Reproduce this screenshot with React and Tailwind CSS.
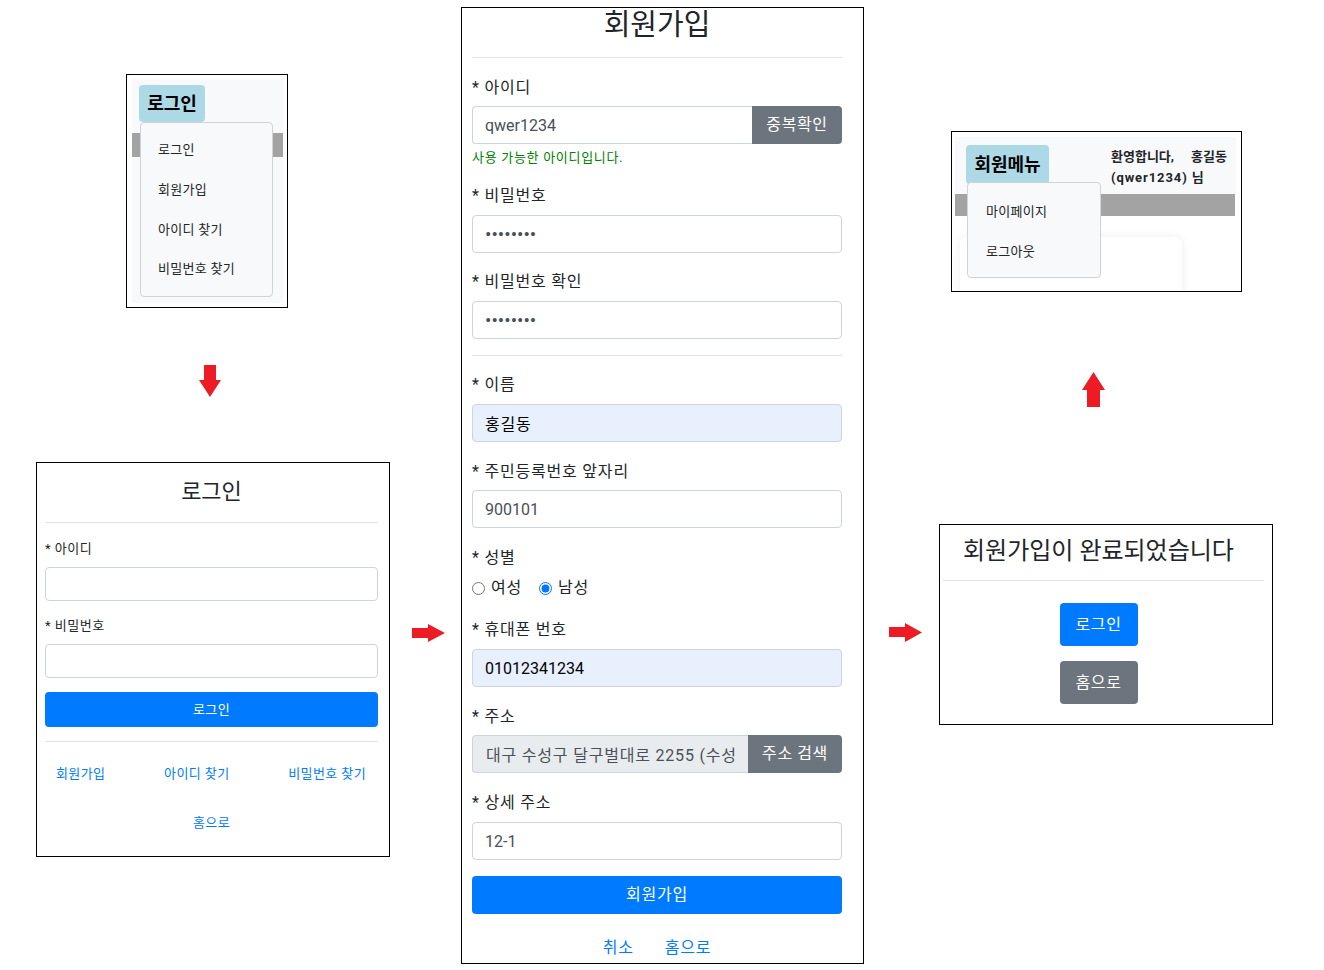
import React from "react";

function Label({ children, className = "" }) {
  return (
    <div
      className={
        "h-[22px] pt-[4px] text-[16px] leading-[18px] tracking-[0.8px] text-[#212529] " +
        className
      }
    >
      {children}
    </div>
  );
}

function Field({ value, type = "text", className = "" }) {
  return (
    <input
      type={type}
      defaultValue={value}
      readOnly
      className={
        "block h-[38px] w-full rounded-[4px] border border-[#ced4da] px-[12px] outline-none " +
        className
      }
    />
  );
}

function Arrows() {
  return (
    <svg
      className="pointer-events-none absolute left-0 top-0"
      width="1324"
      height="970"
      viewBox="0 0 1324 970"
    >
      <polygon
        fill="#ed1c24"
        points="204,365 216,365 216,380 221,380 210,397 199,380 204,380"
      />
      <polygon
        fill="#ed1c24"
        points="412,628 428,628 428,624 445,633 428,642 428,638 412,638"
      />
      <polygon
        fill="#ed1c24"
        points="889,627 905,627 905,623 922,632.5 905,642 905,637 889,637"
      />
      <polygon
        fill="#ed1c24"
        points="1093.5,372 1105,390 1100,390 1100,407 1087,407 1087,390 1082,390"
      />
    </svg>
  );
}

function LoginMenuPanel() {
  return (
    <div className="absolute left-[126px] top-[74px] h-[234px] w-[162px] border border-black bg-white pb-[4px] pl-[5px] pr-[4px] pt-[4px]">
      <div className="flex h-full flex-col bg-[#f8f9fa]">
        <div className="h-[54px] pl-[7px] pt-[6px]">
          <div className="flex h-[37px] w-[66px] items-center justify-center rounded-[4px] bg-[#add8e6] text-[18px] font-bold text-black">
            로그인
          </div>
        </div>
        <div className="h-[24px] bg-[#a3a3a3]" />
        <div className="flex-1" />
      </div>
      <div className="absolute left-[13px] top-[47px] flex h-[175px] w-[133px] flex-col rounded-[4px] border border-[#d3d3d3] bg-[#f8f9fa] pt-[7px] text-[13px] tracking-[0.3px] text-[#212529]">
        <div className="flex h-[40px] items-center pl-[17px]">로그인</div>
        <div className="flex h-[40px] items-center pl-[17px]">회원가입</div>
        <div className="flex h-[39px] items-center pl-[17px]">아이디 찾기</div>
        <div className="flex h-[40px] items-center pl-[17px]">비밀번호 찾기</div>
      </div>
    </div>
  );
}

function LoginFormPanel() {
  return (
    <div className="absolute left-[36px] top-[462px] flex h-[395px] w-[354px] flex-col border border-black bg-white pl-[8px] pr-[11px]">
      <div className="mt-[14px] text-center text-[22px] leading-[30px] text-[#212529]">
        로그인
      </div>
      <div className="mt-[15px] border-t border-[#e2e2e2]" />
      <div className="mt-[17px] text-[13px] leading-[18px] tracking-[0.5px] text-[#212529]">
        * 아이디
      </div>
      <div className="mt-[9px] h-[34px] rounded-[4px] border border-[#ced4da] bg-white" />
      <div className="mt-[16px] text-[13px] leading-[18px] tracking-[0.5px] text-[#212529]">
        * 비밀번호
      </div>
      <div className="mt-[9px] h-[34px] rounded-[4px] border border-[#ced4da] bg-white" />
      <div className="mt-[14px] flex h-[35px] items-center justify-center rounded-[4px] bg-[#007bff] text-[13px] tracking-[0.3px] text-white">
        로그인
      </div>
      <div className="mt-[14px] border-t border-[#e2e2e2]" />
      <div className="mt-[23px] flex justify-between pl-[11px] pr-[12px] text-[13px] leading-[18px] tracking-[0.4px] text-[#007bff]">
        <span>회원가입</span>
        <span>아이디 찾기</span>
        <span>비밀번호 찾기</span>
      </div>
      <div className="mt-[31px] text-center text-[13px] leading-[18px] tracking-[0.4px] text-[#007bff]">
        홈으로
      </div>
    </div>
  );
}

function SignupPanel() {
  return (
    <div className="absolute left-[461px] top-[7px] flex h-[957px] w-[403px] flex-col border border-black bg-white pl-[10px] pr-[21px]">
      <div className="text-center text-[29px] leading-[34px] text-[#212529]">회원가입</div>
      <div className="mt-[15px] border-t border-[#e2e2e2]" />

      <Label className="mt-[17px]">* 아이디</Label>
      <div className="mt-[9px] flex h-[38px]">
        <input
          type="text"
          defaultValue="qwer1234"
          readOnly
          className="block h-[38px] min-w-0 flex-1 rounded-l-[4px] border border-r-0 border-[#ced4da] bg-white px-[12px] text-[16px] text-[#495057] outline-none"
        />
        <div className="flex h-[38px] w-[90px] items-center justify-center rounded-r-[4px] bg-[#6c757d] text-[16px] tracking-[0.6px] text-white">
          중복확인
        </div>
      </div>
      <div className="mt-[5px] text-[13px] leading-[18px] tracking-[0.7px] text-[#008000]">
        사용 가능한 아이디입니다.
      </div>

      <Label className="mt-[16px]">* 비밀번호</Label>
      <Field
        className="mt-[10px] bg-white text-[19px] text-[#495057]"
        type="password"
        value="12345678"
      />

      <Label className="mt-[16px]">* 비밀번호 확인</Label>
      <Field
        className="mt-[10px] bg-white text-[19px] text-[#495057]"
        type="password"
        value="12345678"
      />

      <div className="mt-[16px] border-t border-[#e2e2e2]" />

      <Label className="mt-[16px]">* 이름</Label>
      <Field className="mt-[10px] bg-[#e8f0fe] text-[16px] tracking-[0.8px] text-black" value="홍길동" />

      <Label className="mt-[17px]">* 주민등록번호 앞자리</Label>
      <Field className="mt-[9px] bg-white text-[16px] text-[#495057]" value="900101" />

      <Label className="mt-[17px]">* 성별</Label>
      <div className="mt-[11px] flex h-[20px] items-center gap-[17px] text-[16px] tracking-[0.8px] text-[#212529]">
        <label className="flex items-center gap-[6px]">
          <input type="radio" name="g" className="m-0 h-[13px] w-[13px]" />
          <span>여성</span>
        </label>
        <label className="flex items-center gap-[6px]">
          <input type="radio" name="g" defaultChecked className="m-0 h-[13px] w-[13px]" />
          <span>남성</span>
        </label>
      </div>

      <Label className="mt-[19px]">* 휴대폰 번호</Label>
      <Field className="mt-[10px] bg-[#e8f0fe] text-[16px] text-black" value="01012341234" />

      <Label className="mt-[17px]">* 주소</Label>
      <div className="mt-[9px] flex h-[38px]">
        <input
          type="text"
          defaultValue="대구 수성구 달구벌대로 2255 (수성동1가)"
          readOnly
          className="block h-[38px] min-w-0 flex-1 rounded-l-[4px] border border-r-0 border-[#ced4da] bg-[#e9ecef] px-[13px] text-[16px] tracking-[0.8px] text-[#495057] outline-none"
        />
        <div className="flex h-[38px] w-[94px] items-center justify-center rounded-r-[4px] bg-[#6c757d] text-[16px] tracking-[0.6px] text-white">
          주소 검색
        </div>
      </div>

      <Label className="mt-[17px]">* 상세 주소</Label>
      <Field className="mt-[10px] bg-white text-[16px] text-[#495057]" value="12-1" />

      <div className="mt-[16px] flex h-[38px] items-center justify-center rounded-[4px] bg-[#007bff] text-[16px] tracking-[0.8px] text-white">
        회원가입
      </div>

      <div className="mt-[25px] flex justify-center gap-[31px] text-[16px] leading-[18px] tracking-[0.8px] text-[#007bff]">
        <span>취소</span>
        <span>홈으로</span>
      </div>
    </div>
  );
}

function MemberMenuPanel() {
  return (
    <div className="absolute left-[951px] top-[131px] h-[161px] w-[291px] overflow-hidden border border-black bg-white pb-[4px] pl-[3px] pr-[5px] pt-[5px]">
      <div className="flex h-full flex-col bg-white">
        <div className="flex h-[57px] bg-[#f8f9fa] pl-[11px] pt-[8px]">
          <div className="flex h-[39px] w-[83px] items-center justify-center rounded-[4px] bg-[#add8e6] text-[18px] font-bold text-black">
            회원메뉴
          </div>
          <div className="ml-[62px] pt-[1px] text-[13px] font-bold leading-[21px] text-[#212529]">
            <div>
              환영합니다,<span className="ml-[17px]">홍길동</span>
            </div>
            <div className="tracking-[0.9px]">(qwer1234) 님</div>
          </div>
        </div>
        <div className="h-[22px] w-[280px] bg-[#a3a3a3]" />
        <div className="flex-1" />
      </div>
      <div className="absolute left-[8px] top-[105px] h-[80px] w-[222px] rounded-[6px] bg-white shadow-[0_0_10px_rgba(0,0,0,0.07)]" />
      <div className="absolute left-[15px] top-[50px] flex h-[96px] w-[134px] flex-col rounded-[4px] border border-[#d3d3d3] bg-[#f8f9fa] pt-[9px] text-[13px] tracking-[0.3px] text-[#212529]">
        <div className="flex h-[40px] items-center pl-[18px]">마이페이지</div>
        <div className="flex h-[40px] items-center pl-[18px]">로그아웃</div>
      </div>
    </div>
  );
}

function CompletePanel() {
  return (
    <div className="absolute left-[939px] top-[524px] flex h-[201px] w-[334px] flex-col border border-black bg-white pl-[3px] pr-[8px]">
      <div className="mr-[10px] mt-[11px] text-center text-[24px] leading-[30px] text-[#212529]">
        회원가입이 완료되었습니다
      </div>
      <div className="mt-[14px] border-t border-[#e2e2e2]" />
      <div className="mr-[10px] mt-[22px] flex flex-col items-center gap-[15px]">
        <div className="flex h-[43px] w-[78px] items-center justify-center rounded-[4px] bg-[#007bff] text-[16px] tracking-[0.6px] text-white">
          로그인
        </div>
        <div className="flex h-[43px] w-[78px] items-center justify-center rounded-[4px] bg-[#6c757d] text-[16px] tracking-[0.6px] text-white">
          홈으로
        </div>
      </div>
    </div>
  );
}

export default function App() {
  return (
    <div className="relative h-[970px] w-[1324px] overflow-hidden bg-white font-[Roboto,'Noto_Sans_CJK_KR',sans-serif]">
      <LoginMenuPanel />
      <LoginFormPanel />
      <SignupPanel />
      <MemberMenuPanel />
      <CompletePanel />
      <Arrows />
    </div>
  );
}
